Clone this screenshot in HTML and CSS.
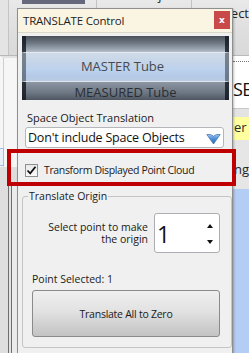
FILE: index.html
```html
<!DOCTYPE html>
<html>
<head>
<meta charset="utf-8">
<link rel="stylesheet" href="styles.css">
</head>
<body>
<div class="app">
  <div class="toolbar">
    <div class="tb-left"></div>
    <div class="tb-block"><div class="tb-dark"></div></div>
    <div class="tb-item tb-save"><span class="tb-line1">Save Project</span></div>
    <div class="tb-item tb-saveas"><span class="tb-line1">Save As</span><span class="tb-line2">Project</span></div>
  </div>
  <div class="workspace">
    <div class="left-pane">
      <div class="lp-white"><div class="lp-tab"></div></div>
      <div class="lp-gray"><div class="lp-rail"></div></div>
    </div>
    <div class="center"></div>
    <div class="right-pane">
      <div class="rp-top"><div class="rp-dots"></div><div class="rp-se">SE</div></div>
      <div class="rp-band"></div>
      <div class="rp-yellow">er</div>
      <div class="rp-gray">ng</div>
      <div class="rp-blue"></div>
    </div>
  </div>
</div>

<div class="dialog">
  <div class="titlebar">
    <span class="title">TRANSLATE Control</span>
    <span class="close">x</span>
  </div>
  <div class="dbody">
    <div class="tube">
      <div class="t-row t-top"></div>
      <div class="t-row t-sel">MASTER Tube</div>
      <div class="t-row t-bot">MEASURED Tube</div>
    </div>
    <div class="label">Space Object Translation</div>
    <div class="combo">
      <span class="combo-text">Don't include Space Objects</span>
      <svg class="combo-arrow" width="15" height="12" viewBox="0 0 15 12">
        <defs>
          <linearGradient id="ag" x1="0" y1="0" x2="0" y2="1">
            <stop offset="0" stop-color="#9cc4f2"/>
            <stop offset="0.45" stop-color="#4f8fd8"/>
            <stop offset="1" stop-color="#2f67b4"/>
          </linearGradient>
        </defs>
        <path d="M0.8 1.5 L4.5 1.5 L7.5 3.2 L10.5 1.5 L14.2 1.5 L7.5 11 Z" fill="url(#ag)" stroke="#3a6fae" stroke-width="0.7" stroke-linejoin="round"/>
      </svg>
    </div>
    <div class="check-row">
      <span class="checkbox">
        <svg width="11" height="11" viewBox="0 0 11 11"><path d="M1.5 5.5 L4.2 8.3 L9.5 1.8" fill="none" stroke="#111" stroke-width="1.8"/></svg>
      </span>
      <span class="check-label">Transform Displayed Point Cloud</span>
    </div>
    <fieldset class="group">
      <legend class="legend">Translate Origin</legend>
      <div class="spin-row">
        <div class="spin-label">Select point to make<br>the origin</div>
        <div class="spin">
          <span class="spin-value">1</span>
          <span class="spin-arrows">
            <svg width="6" height="4" viewBox="0 0 6 4"><path d="M0 4 L3 0 L6 4 Z" fill="#111"/></svg>
            <svg width="6" height="4" viewBox="0 0 6 4"><path d="M0 0 L6 0 L3 4 Z" fill="#111"/></svg>
          </span>
        </div>
      </div>
      <div class="selected">Point Selected: 1</div>
      <div class="button">Translate All to Zero</div>
    </fieldset>
  </div>
</div>

<div class="highlight"></div>
</body>
</html>
```

FILE: styles.css
```css
* { box-sizing: border-box; }

body {
  margin: 0;
  width: 249px;
  height: 353px;
  overflow: hidden;
  position: relative;
  font-family: "Open Sans", "Noto Sans", sans-serif;
  color: #1a1a1a;
  background: #ffffff;
}

/* ---------- background application ---------- */
.app {
  display: flex;
  flex-direction: column;
  height: 353px;
}

.toolbar {
  height: 56px;
  display: flex;
  background: linear-gradient(#e9e9e9, #dedede 60%, #d9d9d9);
  border-bottom: 1px solid #b9b9b9;
  overflow: hidden;
}

.tb-left {
  width: 22px;
  border-left: 8px solid #e4e4e4;
  box-shadow: inset 1px 0 0 #c4c4c4;
}

.tb-block {
  width: 75px;
  border-right: 1px solid #c2c2c2;
}

.tb-dark {
  width: 63px;
  height: 4px;
  background: #66697c;
}

.tb-item {
  display: flex;
  flex-direction: column;
  font-size: 13px;
  line-height: 15px;
  color: #222;
  margin-top: -12px;
}

.tb-save {
  width: 95px;
  padding-left: 9px;
  border-right: 1px solid #c2c2c2;
}

.tb-saveas {
  padding-left: 9px;
  white-space: nowrap;
}

.tb-line2 {
  margin-top: 3px;
  padding-left: 6px;
}

.workspace {
  flex: 1;
  display: flex;
}

.left-pane {
  width: 17px;
  display: flex;
  flex-direction: column;
}

.lp-white {
  height: 111px;
  background: #f6f6f6;
  border-top: 2px solid #e2e2e2;
  border-left: 3px solid #f6f6f6;
  box-shadow: inset 1px 0 0 #cfcfcf;
  display: flex;
  flex-direction: column;
  justify-content: flex-end;
}

.lp-tab {
  width: 4px;
  height: 18px;
  margin-left: -3px;
  margin-bottom: 1px;
  border: 1px solid #9fbde6;
  border-left: none;
  background: #e7f0fb;
}

.lp-gray {
  flex: 1;
  background: #dedede;
  padding-top: 18px;
}

.lp-rail {
  height: 100%;
  margin-left: 8px;
  width: 9px;
  border-left: 1px solid #6e6e6e;
  background: linear-gradient(90deg, #e2e2e2 0 2px, #6e6e6e 2px 3px, #ececec 3px);
}

.center {
  flex: 1;
  background: #ffffff;
}

.right-pane {
  width: 17px;
  display: flex;
  flex-direction: column;
  overflow: hidden;
}

.rp-top {
  height: 52px;
  background: #ffffff;
  padding-left: 1px;
}

.rp-dots {
  height: 6px;
  margin-top: 5px;
  border-top: 1px dotted #777;
}

.rp-se {
  font-size: 18px;
  line-height: 20px;
  margin-top: 12px;
  color: #111;
  letter-spacing: -0.5px;
}

.rp-band {
  height: 9px;
  background: #e3e3e3;
  border-top: 1px solid #c9c9c9;
}

.rp-yellow {
  height: 23px;
  background: #ffffa0;
  font-size: 13px;
  line-height: 20px;
  padding-left: 2px;
  color: #2a2a2a;
}

.rp-gray {
  height: 49px;
  background: #e6e6e6;
  font-size: 13px;
  line-height: 14px;
  padding-top: 22px;
  padding-left: 2px;
  color: #222;
}

.rp-blue {
  flex: 1;
  background: #b4cdf4;
  border-left: 1px solid #cfd6df;
}

/* ---------- dialog ---------- */
.dialog {
  position: absolute;
  left: 17px;
  top: 8px;
  width: 216px;
  height: 360px;
  background: #f0f0f0;
  border: 1px solid #8f8f8f;
  box-shadow: 1px 1px 2px rgba(0, 0, 0, 0.25);
}

.titlebar {
  height: 24px;
  background: #faf5e2;
  border-bottom: 1px solid #dcd8c8;
  display: flex;
  align-items: center;
  justify-content: space-between;
  padding: 0 2px 0 5px;
}

.title {
  font-size: 11.5px;
  color: #1e1e1e;
  letter-spacing: -0.2px;
}

.close {
  width: 16px;
  height: 18px;
  background: #c9494b;
  color: #fff;
  font-size: 9px;
  font-weight: bold;
  font-family: "DejaVu Sans", sans-serif;
  display: flex;
  align-items: center;
  justify-content: center;
  margin-top: -2px;
}

.dbody {
  display: flex;
  flex-direction: column;
  padding: 3px 3px 0 4px;
}

.tube {
  height: 64px;
  display: flex;
  flex-direction: column;
  overflow: hidden;
}

.t-row {
  display: flex;
  align-items: center;
  justify-content: center;
  font-size: 13px;
  border-left: 4px solid rgba(18, 24, 32, 0.82);
  border-right: 4px solid rgba(18, 24, 32, 0.82);
}

.t-top {
  height: 16px;
  background: linear-gradient(#4a5059, #6f7884 45%, #a5afbb 90%, #b9c2cc);
}

.t-sel {
  height: 30px;
  color: #464a50;
  background: linear-gradient(#cfdbe8, #c5d5e8 35%, #bcd2ee 60%, #b3c9e6 85%, #bccde2);
  border-top: 1px solid #e2e9f1;
  border-bottom: 1px solid #dde5ee;
  border-left-color: rgba(18, 24, 32, 0.45);
  border-right-color: rgba(18, 24, 32, 0.45);
  padding-right: 6px;
  padding-bottom: 3px;
}

.t-bot {
  height: 18px;
  color: #2a2e33;
  background: linear-gradient(#8d97a3, #6d7783 60%, #4e5661);
  padding-top: 2px;
}

.label {
  font-size: 11px;
  line-height: 14px;
  margin: 11px 0 0 5px;
  color: #1a1a1a;
}

.combo {
  height: 21px;
  width: 199px;
  margin: 2px 0 0 3px;
  border: 1px solid #b4b6ba;
  border-radius: 3px;
  background: #ffffff;
  display: flex;
  align-items: center;
  justify-content: space-between;
  padding: 0 2px 0 2px;
}

.combo-text {
  font-size: 12.5px;
  color: #111;
  letter-spacing: -0.2px;
}

.combo-arrow {
  margin-top: 2px;
}

.check-row {
  display: flex;
  align-items: center;
  height: 14px;
  margin: 15px 0 0 3px;
  gap: 6px;
}

.checkbox {
  width: 13px;
  height: 13px;
  border: 1px solid #8f8f8f;
  background: linear-gradient(#e9e9e9, #fafafa);
  display: flex;
  align-items: center;
  justify-content: center;
}

.check-label {
  font-size: 10.5px;
  letter-spacing: -0.35px;
  color: #1a1a1a;
}

.group {
  margin: 12px 0 0 0;
  padding: 10px 11px 10px 9px;
  border: 1px solid #c4c4c4;
  border-radius: 3px;
  width: 207px;
  display: flex;
  flex-direction: column;
}

.legend {
  font-size: 10.5px;
  line-height: 14px;
  padding: 0 1px;
  margin-left: -4px;
  color: #1a1a1a;
}

.spin-row {
  display: flex;
  justify-content: flex-end;
  align-items: center;
  gap: 6px;
}

.spin-label {
  font-size: 10.5px;
  line-height: 12px;
  text-align: right;
  color: #1a1a1a;
}

.spin {
  width: 66px;
  height: 40px;
  border: 1px solid #acaeb3;
  border-radius: 3px;
  background: #fff;
  display: flex;
  align-items: center;
  justify-content: space-between;
  padding: 0 6px 0 2px;
}

.spin-value {
  font-size: 23px;
  line-height: 24px;
  color: #111;
  margin-top: 2px;
}

.spin-arrows {
  display: flex;
  flex-direction: column;
  justify-content: space-between;
  height: 20px;
  margin-top: 1px;
}

.selected {
  font-size: 10.5px;
  line-height: 14px;
  margin-top: 19px;
  color: #1a1a1a;
}

.button {
  height: 47px;
  width: 188px;
  margin-top: 4px;
  border: 1px solid #8a8a8a;
  border-radius: 3px;
  background: linear-gradient(#efefef, #e2e2e2 45%, #cdcdcd 80%, #c4c4c4);
  display: flex;
  align-items: center;
  justify-content: center;
  font-size: 10.5px;
  letter-spacing: -0.25px;
  color: #1a1a1a;
}

/* annotation overlay */
.highlight {
  position: absolute;
  left: 7px;
  top: 149px;
  width: 229px;
  height: 37px;
  border: 4px solid #c00000;
}
```
